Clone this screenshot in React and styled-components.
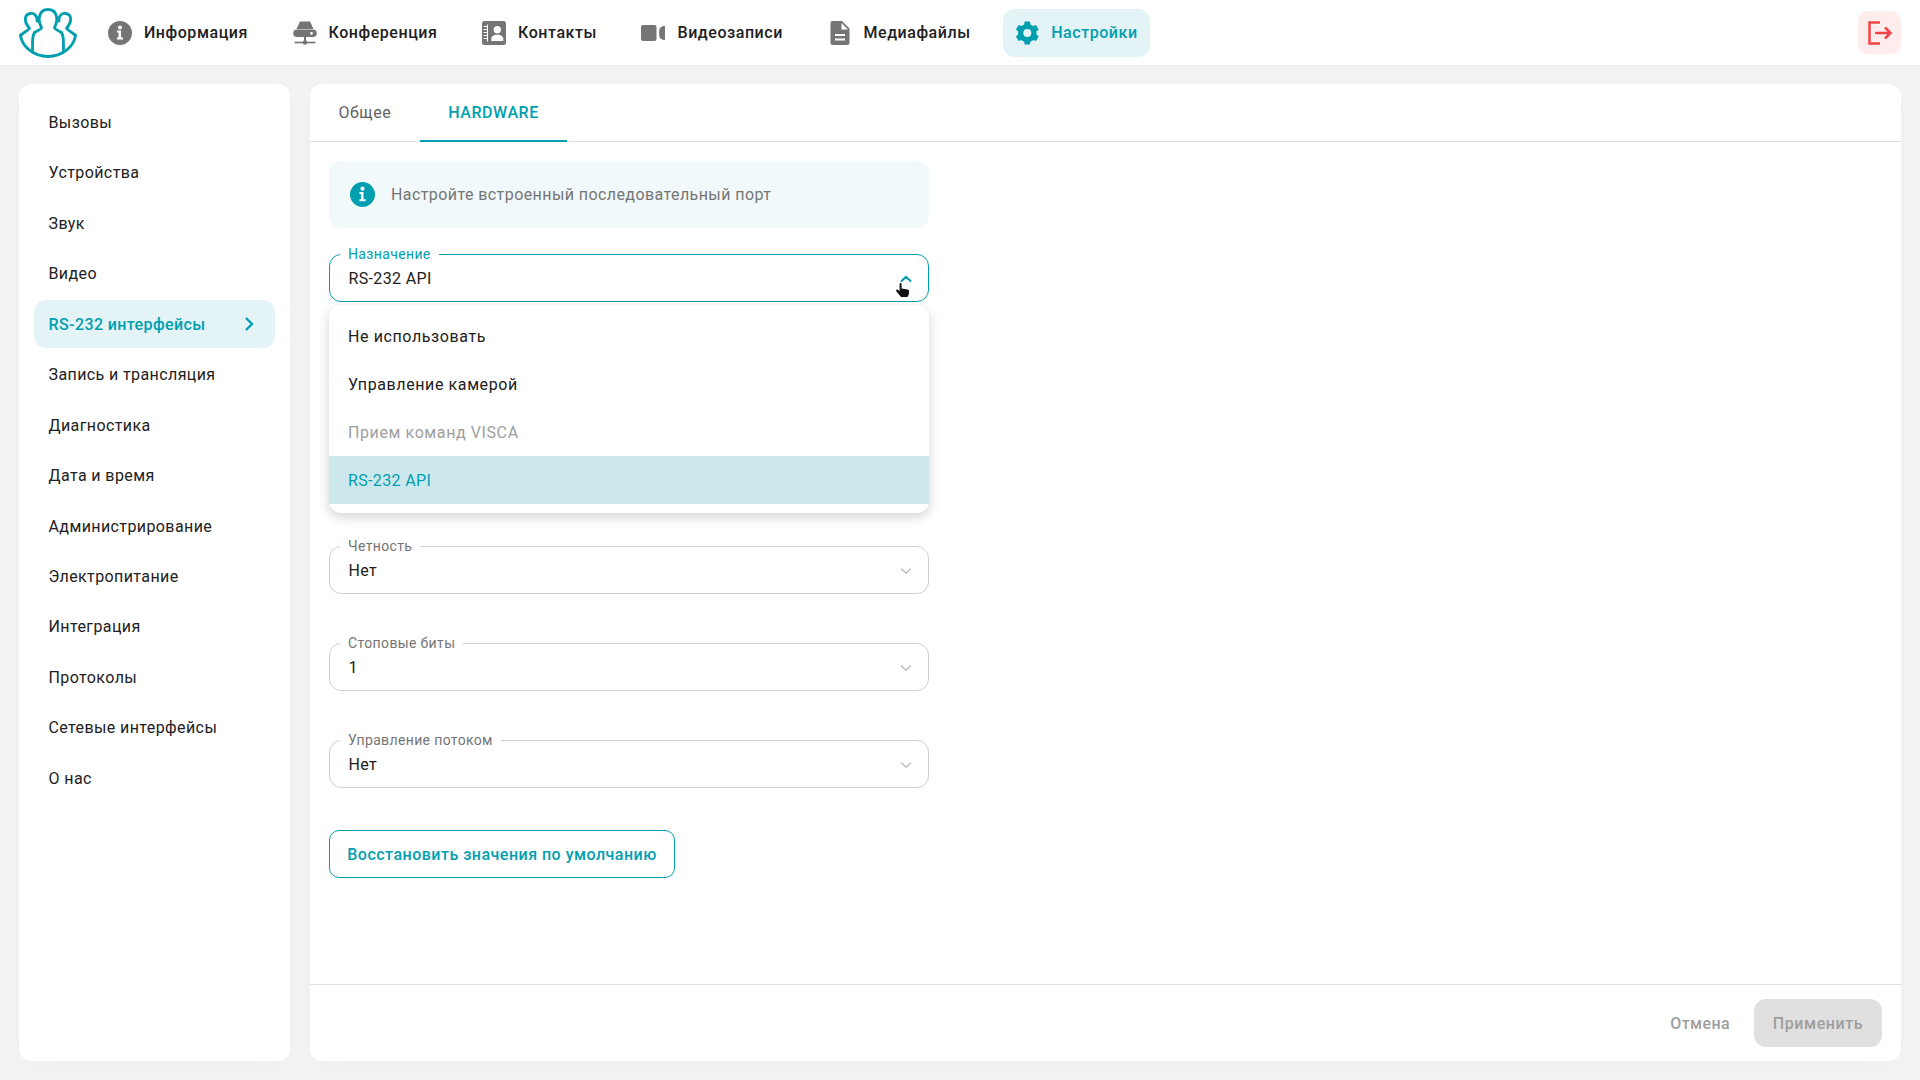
import React from "react";
import styled, { createGlobalStyle } from "styled-components";

const teal = "#009fb0";

const Global = createGlobalStyle`
  html, body { margin: 0; padding: 0; background: #f3f3f3; }
  body { font-family: Roboto, "Liberation Sans", sans-serif; color: #212121; }
  * { box-sizing: border-box; }
`;

const Page = styled.div`
  width: 1920px; height: 1080px; display: flex; flex-direction: column; overflow: hidden;
  background: #f3f3f3;
`;
const Header = styled.header`
  height: 65px; flex: none; background: #fff; display: flex; align-items: center;
  padding: 0 19px; box-shadow: 0 2px 8px rgba(0,0,0,.03);
`;
const LogoWrap = styled.div`
  width: 58px; height: 50px; flex: none; margin-right: 19px;
`;
const Nav = styled.nav`display: flex; align-items: center; gap: 20.6px;`;
const NavItem = styled.a`
  display: flex; align-items: center; gap: 12px; height: 48px; padding: 0 12px; border-radius: 12px;
  font-size: 16px; font-weight: 500; letter-spacing: .55px; white-space: nowrap;
  color: ${p => p.$active ? teal : "#212121"};
  background: ${p => p.$active ? "#e3f3f6" : "transparent"};
  svg { flex: none; display: block; width: 24px; height: 24px; fill: ${p => p.$active ? teal : "#757575"}; }
`;
const Logout = styled.button`
  margin-left: auto; width: 43px; height: 43px; border: 0; padding: 0; border-radius: 10px;
  background: #ffecec; display: flex; align-items: center; justify-content: center;
`;
const Body = styled.div`
  flex: 1; min-height: 0; display: flex; gap: 20px; padding: 19px 19px 19px 19px;
`;
const Sidebar = styled.aside`
  width: 271px; flex: none; background: #fff; border-radius: 12px; padding: 14.5px 15px;
  display: flex; flex-direction: column; gap: 2.45px; box-shadow: 0 4px 20px rgba(0,0,0,.02);
`;
const SideItem = styled.a`
  height: 48px; flex: none; display: flex; align-items: center; justify-content: space-between;
  padding: 0 20.5px 0 14.5px; border-radius: 12px; font-size: 16px; letter-spacing: .4px;
  font-weight: ${p => p.$active ? 500 : 400};
  color: ${p => p.$active ? teal : "#212121"};
  background: ${p => p.$active ? "#e3f3f6" : "transparent"};
`;
const Main = styled.main`
  flex: 1; min-width: 0; background: #fff; border-radius: 12px; display: flex; flex-direction: column;
  box-shadow: 0 4px 20px rgba(0,0,0,.02);
`;
const Tabs = styled.div`
  height: 58px; flex: none; display: flex; border-bottom: 1px solid #e0e0e0;
`;
const Tab = styled.a`
  height: 58px; padding: 0 28.5px; display: flex; align-items: center; font-size: 16px; letter-spacing: .55px;
  font-weight: ${p => p.$active ? 500 : 400};
  color: ${p => p.$active ? teal : "#616161"};
  border-bottom: 2px solid ${p => p.$active ? teal : "transparent"};
`;
const Content = styled.div`
  flex: 1; min-height: 0; padding: 19px 19px; display: flex; flex-direction: column; align-items: flex-start;
`;
const InfoBox = styled.div`
  width: 600px; height: 67px; flex: none; border-radius: 12px; background: #f2f9fb; display: flex; align-items: center;
  gap: 16px; padding: 0 21px; font-size: 16px; color: #757575; letter-spacing: .42px; margin-bottom: 26px;
`;
const Form = styled.div`width: 600px; position: relative; display: flex; flex-direction: column; gap: 49px;`;
const Field = styled.div`
  height: 48px; border-radius: 12px; position: relative; display: flex; align-items: center; justify-content: space-between;
  padding: 1px 16px 0 18.5px; font-size: 16px; letter-spacing: .35px;
  border: 1px solid ${p => p.$open ? teal : "#cfcfcf"};
`;
const Legend = styled.span`
  position: absolute; left: 10px; top: -9px; padding: 0 8px; background: #fff; font-size: 14px; line-height: 16px; letter-spacing: .36px;
  color: ${p => p.$open ? teal : "#757575"};
`;
const Covered = styled.div`height: 146px; flex: none;`;
const Menu = styled.div`
  position: absolute; left: 0; right: 0; top: 51px; height: 208px; background: #fff; border-radius: 12px;
  padding: 7px 0 8px; box-shadow: 0 4px 12px rgba(0,0,0,.18); z-index: 2;
`;
const MenuItem = styled.div`
  height: 48px; display: flex; align-items: center; padding: 0 19px; font-size: 16px;
  letter-spacing: ${p => p.$selected ? ".35px" : ".6px"};
  color: ${p => p.$selected ? teal : p.$disabled ? "#9e9e9e" : "#212121"};
  background: ${p => p.$selected ? "#cce8ed" : "transparent"};
`;
const Cursor = styled.svg`
  position: absolute; right: 20px; top: 29px; width: 13px; height: 14px; z-index: 3;
`;
const Outline = styled.button`
  margin-top: 42px; height: 48px; width: 346px; background: #fff; border: 1px solid ${teal}; border-radius: 10px;
  color: ${teal}; font: 500 16px Roboto, sans-serif; letter-spacing: .49px; padding: 0;
`;
const Footer = styled.footer`
  height: 77px; flex: none; border-top: 1px solid #e0e0e0; display: flex; align-items: center; justify-content: flex-end;
  padding: 0 19px; gap: 24px;
`;
const Cancel = styled.span`font-size: 16px; font-weight: 500; color: #9e9e9e; letter-spacing: .4px;`;
const Apply = styled.button`
  width: 128px; height: 48px; border: 0; border-radius: 12px; background: #e0e0e0; color: #9e9e9e; padding: 0;
  font: 500 16px Roboto, sans-serif; letter-spacing: .6px;
`;

const Logo = () => (
  <LogoWrap>
    <svg viewBox="0 0 58 50" width="58" height="50" fill="none" stroke={teal} strokeWidth="2.8" strokeLinecap="round" strokeLinejoin="round">
      <path d="M1.500 27.500C3 38 14 48.500 29 48.500C44 48.500 55 38 56.500 27.500" />
      <path d="M1.500 27.500C4 24.500 8.500 23 10.500 20.500C5.500 15 4 6.500 11.500 5.500C15.500 5 18.500 8 18 13" />
      <path d="M56.500 27.500C54 24.500 49.500 23 47.500 20.500C52.500 15 54 6.500 46.500 5.500C42.500 5 39.500 8 40 13" />
      <path d="M15.500 24.500C18.500 22.500 22.500 21.500 22.500 19.500C18.500 12 19.500 1.500 29 1.500C38.500 1.500 39.500 12 35.500 19.500C35.500 21.500 39.500 22.500 42.500 24.500" />
      <path d="M15.500 24.500C13.500 28 13.500 31 13.500 44M42.500 24.500C44.500 28 44.500 31 44.500 44" />
    </svg>
  </LogoWrap>
);

const IconInfo = () => <svg viewBox="0 0 24 24"><path d="M12 0a12 12 0 1 0 0 24 12 12 0 0 0 0-24zm0 4.400a2 2 0 1 1 0 4 2 2 0 0 1 0-4zM15 18.500H9v-2h1.500v-5H9v-2h4v7h2z" fillRule="evenodd"/></svg>;
const IconConf = () => <svg viewBox="0 0 24 24"><path d="M6.500 1.500C6.500 .8 7 .5 7.500 .5h9c.5 0 1 .3 1 1L20.500 8h-17z"/><path fillRule="evenodd" d="M4 8.500h16a3.800 3.800 0 0 1 0 7.600H4a3.800 3.800 0 0 1 0-7.600zm14.500 2.400a1.400 1.400 0 1 0 0 2.800 1.400 1.400 0 0 0 0-2.800z"/><rect x="11" y="16" width="2" height="4.500"/><rect x="1.500" y="20.700" width="21" height="1.600"/><circle cx="12" cy="21.500" r="2.300"/></svg>;
const IconContacts = () => <svg viewBox="0 0 24 24"><path fillRule="evenodd" d="M2.500 0h19A2.500 2.500 0 0 1 24 2.500v19a2.500 2.500 0 0 1-2.500 2.500h-19A2.500 2.500 0 0 1 0 21.500v-19A2.500 2.500 0 0 1 2.500 0zM15.300 5a3.700 3.700 0 1 0 0 7.400 3.700 3.700 0 0 0 0-7.400zM9.300 20h12v-2.500c0-2.500-3-3.800-6-3.800s-6 1.300-6 3.800zM1.500 5v1h3.500V5zm0 3v1h3.500V8zm0 3v1h3.500v-1zm0 3v1h3.500v-1zm0 3v1h3.500v-1zM5 3.500h1v17H5z"/></svg>;
const IconVideo = () => <svg viewBox="0 0 24 24"><rect x="0" y="4" width="15.500" height="16" rx="2"/><path d="M23 4.800a1 1 0 0 1 1 1v12.400a1 1 0 0 1-1 1c-1.500-.5-3-1.200-4.200-2.200-1-2.500-1-7.500 0-10 1.200-1 2.700-1.700 4.200-2.200z"/></svg>;
const IconFile = () => <svg viewBox="0 0 24 24"><path fillRule="evenodd" d="M4.500 0h9.500l7.500 7.500V22a2 2 0 0 1-2 2h-15a2 2 0 0 1-2-2V2a2 2 0 0 1 2-2zm9 2v6.500H20zM7 13v2h10v-2zm0 4.500v2h10v-2z"/></svg>;
const IconGear = () => <svg viewBox="0 0 24 24"><path d="M21.400 13.600a9.600 9.600 0 0 0 0-3.200l2.300-1.800-2.700-4.700-2.800 1.100a9.500 9.500 0 0 0-2.800-1.600L15 .5H9.600l-.4 2.900a9.500 9.500 0 0 0-2.800 1.600L3.600 3.900.9 8.600l2.300 1.800a9.600 9.600 0 0 0 0 3.200L.9 15.400l2.700 4.700 2.800-1.100a9.500 9.500 0 0 0 2.800 1.600l.4 2.900H15l.4-2.900a9.500 9.500 0 0 0 2.800-1.600l2.800 1.100 2.700-4.700zM12.300 16a4 4 0 1 1 0-8 4 4 0 0 1 0 8z" fillRule="evenodd"/></svg>;

const Chevron = ({ up, color }) => (
  <svg width="12" height="8" viewBox="0 0 12 8" fill="none" stroke={color} strokeWidth={up ? 2 : 1.5} strokeLinecap="round" strokeLinejoin="round">
    <path d={up ? "M1.500 6L6 1.800 10.500 6" : "M1.500 2L6 6.200 10.500 2"} />
  </svg>
);

const side = ["Вызовы","Устройства","Звук","Видео","RS-232 интерфейсы","Запись и трансляция","Диагностика","Дата и время","Администрирование","Электропитание","Интеграция","Протоколы","Сетевые интерфейсы","О нас"];

const SelectField = ({ label, value, open }) => (
  <Field $open={open}>
    <Legend $open={open}>{label}</Legend>
    {value}
    <Chevron up={open} color={open ? teal : "#bdbdbd"} />
  </Field>
);

export default function App() {
  return (
    <Page>
      <Global />
      <Header>
        <Logo />
        <Nav>
          <NavItem><IconInfo />Информация</NavItem>
          <NavItem><IconConf />Конференция</NavItem>
          <NavItem><IconContacts />Контакты</NavItem>
          <NavItem><IconVideo />Видеозаписи</NavItem>
          <NavItem><IconFile />Медиафайлы</NavItem>
          <NavItem $active><IconGear />Настройки</NavItem>
        </Nav>
        <Logout aria-label="Выход">
          <svg width="26" height="26" viewBox="0 0 26 26" fill="none" stroke="#f44545" strokeWidth="2.500">
            <path d="M13 2.500H2.500v21H13" />
            <path d="M8 13H23.500M18 7.500L23.500 13 18 18.500" />
          </svg>
        </Logout>
      </Header>
      <Body>
        <Sidebar>
          {side.map((s, i) => (
            <SideItem key={s} $active={i === 4}>
              {s}
              {i === 4 && (
                <svg width="12" height="16" viewBox="0 0 12 16" fill="none" stroke={teal} strokeWidth="2.400"><path d="M3 2l6 6-6 6" /></svg>
              )}
            </SideItem>
          ))}
        </Sidebar>
        <Main>
          <Tabs>
            <Tab>Общее</Tab>
            <Tab $active>HARDWARE</Tab>
          </Tabs>
          <Content>
            <InfoBox>
              <svg width="25" height="25" viewBox="0 0 24 24" fill={teal}><path fillRule="evenodd" d="M12 0a12 12 0 1 0 0 24 12 12 0 0 0 0-24zm0 4.400a2 2 0 1 1 0 4 2 2 0 0 1 0-4zM15 18.500H9v-2h1.500v-5H9v-2h4v7h2z"/></svg>
              Настройте встроенный последовательный порт
            </InfoBox>
            <Form>
              <SelectField label="Назначение" value="RS-232 API" open />
              <Menu>
                <MenuItem>Не использовать</MenuItem>
                <MenuItem>Управление камерой</MenuItem>
                <MenuItem $disabled>Прием команд VISCA</MenuItem>
                <MenuItem $selected>RS-232 API</MenuItem>
              </Menu>
              <Cursor viewBox="0 0 13 14">
                <path fill="#111" d="M3.600 1a1 1 0 0 1 2 0v4.500l6.200 1 1.200 1V11l-1.500 3H5L.3 8.200c-.6-1 .6-2.200 1.800-1.300L3.600 8z" />
              </Cursor>
              <Covered />
              <SelectField label="Четность" value="Нет" />
              <SelectField label="Стоповые биты" value="1" />
              <SelectField label="Управление потоком" value="Нет" />
            </Form>
            <Outline>Восстановить значения по умолчанию</Outline>
          </Content>
          <Footer>
            <Cancel>Отмена</Cancel>
            <Apply>Применить</Apply>
          </Footer>
        </Main>
      </Body>
    </Page>
  );
}
